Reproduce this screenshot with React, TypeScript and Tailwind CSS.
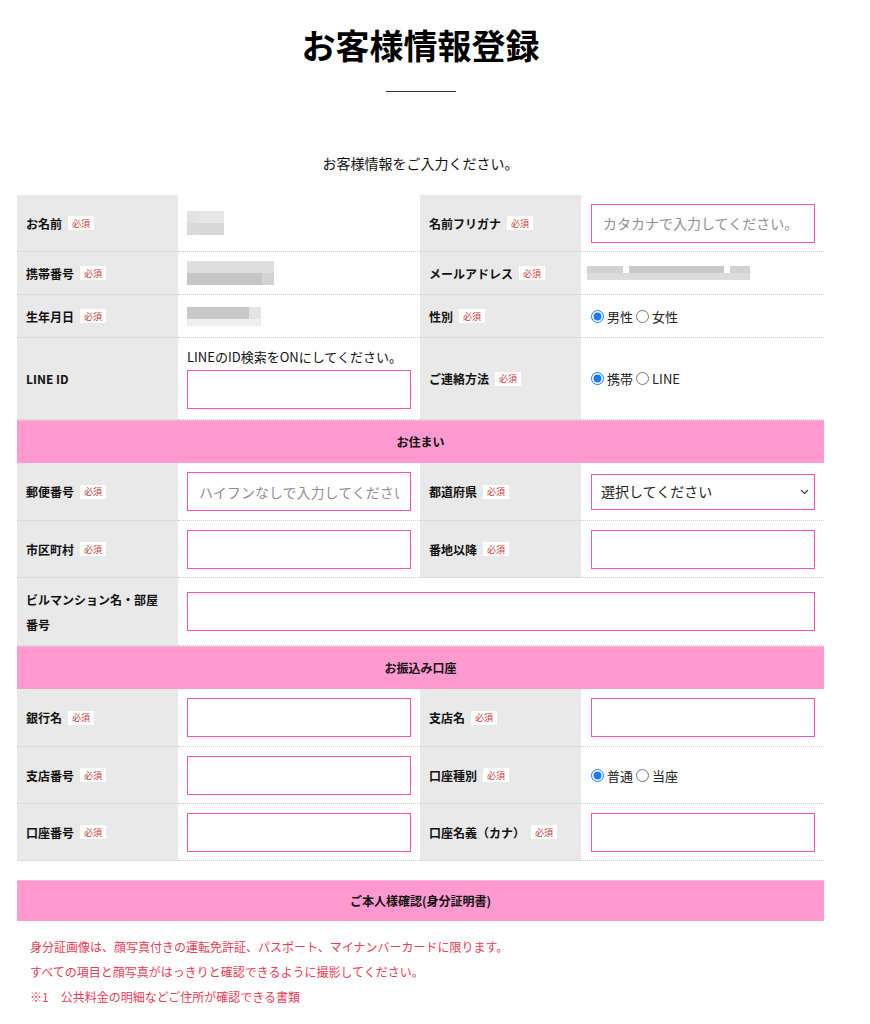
import React from "react";

const Badge = () => (
  <span className="ml-[6px] inline-flex h-[14px] items-center bg-white px-[4px] text-[9px] font-normal leading-none text-[#c73c3c]">
    必須
  </span>
);

const Label = ({ text, req = true, h }: { text: React.ReactNode; req?: boolean; h: string }) => (
  <div className={`flex items-center border-b border-dotted border-[#cfcfcf] bg-[#e9e9e9] pl-[9px] text-[12px] font-bold leading-[25px] text-[#111] ${h}`}>
    <span>{text}</span>
    {req && <Badge />}
  </div>
);

const Cell = ({ children, h, pl = "pl-[9px]", extra = "" }: { children?: React.ReactNode; h: string; pl?: string; extra?: string }) => (
  <div className={`flex items-center border-b border-dotted border-[#cfcfcf] bg-white ${pl} ${h} ${extra}`}>{children}</div>
);

const Input = ({ placeholder, w = "w-[224px]" }: { placeholder?: string; w?: string }) => (
  <input
    placeholder={placeholder}
    className={`h-[39px] ${w} border border-[#ff4fb0] bg-white px-[11px] text-[14px] text-[#222] outline-none placeholder:text-[#8f8f8f]`}
  />
);

const Radio = ({ a, b }: { a: string; b: string }) => (
  <div className="flex items-center text-[13px] leading-none text-[#222]">
    <input type="radio" defaultChecked name={a} className="m-0 h-[13px] w-[13px] accent-[#1a7cf5]" />
    <span className="ml-[3px]">{a}</span>
    <input type="radio" name={a} className="m-0 ml-[3px] h-[13px] w-[13px] accent-[#1a7cf5]" />
    <span className="ml-[3px]">{b}</span>
  </div>
);

const Pink = ({ text, h = "h-[43px]" }: { text: string; h?: string }) => (
  <div className={`col-span-4 flex items-center justify-center border-t border-[#ffb6da] bg-[#ff99cf] text-[12px] font-bold text-[#111] ${h}`}>
    {text}
  </div>
);

export default function App() {
  return (
    <div className="min-h-[1024px] w-[870px] bg-white font-['Noto_Sans_CJK_JP',sans-serif] text-[#222]">
      <div className="ml-[17px] w-[807px]">
        <h1 className="pt-[22px] text-center text-[34px] font-bold leading-[46px] text-black">お客様情報登録</h1>
        <div className="mx-auto mt-[23px] h-px w-[70px] bg-[#333]" />
        <p className="mt-[61px] text-center text-[14px] leading-[20px] text-[#111]">お客様情報をご入力ください。</p>

        <div className="mt-[22px] grid grid-cols-[161px_242px_161px_243px]">
          {/* row 1 */}
          <Label text="お名前" h="h-[57px]" />
          <Cell h="h-[57px]">
            <div className="flex flex-col blur-[0.6px]">
              <div className="flex">
                <div className="h-[12px] w-[12px] bg-[#e2e2e2]" />
                <div className="h-[12px] w-[25px] bg-[#e6e6e6]" />
              </div>
              <div className="flex">
                <div className="h-[12px] w-[12px] bg-[#dadada]" />
                <div className="h-[12px] w-[25px] bg-[#d8d8d8]" />
              </div>
            </div>
          </Cell>
          <Label text="名前フリガナ" h="h-[57px]" />
          <Cell h="h-[57px]" pl="pl-[10px]">
            <Input placeholder="カタカナで入力してください。" />
          </Cell>

          {/* row 2 */}
          <Label text="携帯番号" h="h-[43px]" />
          <Cell h="h-[43px]">
            <div className="flex flex-col blur-[0.6px]">
              <div className="h-[12px] w-[87px] bg-[#dedede]" />
              <div className="flex">
                <div className="h-[12px] w-[75px] bg-[#c6c6c6]" />
                <div className="h-[12px] w-[12px] bg-[#d4d4d4]" />
              </div>
            </div>
          </Cell>
          <Label text="メールアドレス" h="h-[43px]" />
          <Cell h="h-[43px]" pl="pl-[6px]">
            <div className="flex flex-col blur-[0.7px]">
              <div className="flex">
                <div className="h-[7px] w-[36px] bg-[#d2d2d2]" />
                <div className="h-[7px] w-[6px] bg-white" />
                <div className="h-[7px] w-[95px] bg-[#c9c9c9]" />
                <div className="h-[7px] w-[6px] bg-white" />
                <div className="h-[7px] w-[20px] bg-[#d2d2d2]" />
              </div>
              <div className="flex">
                <div className="h-[7px] w-[163px] bg-[#dcdcdc]" />
              </div>
            </div>
          </Cell>

          {/* row 3 */}
          <Label text="生年月日" h="h-[43px]" />
          <Cell h="h-[43px]">
            <div className="flex flex-col blur-[0.6px]">
              <div className="flex">
                <div className="h-[12px] w-[62px] bg-[#c8c8c8]" />
                <div className="h-[12px] w-[12px] bg-[#e4e4e4]" />
              </div>
              <div className="h-[7px] w-[74px] bg-[#efefef]" />
            </div>
          </Cell>
          <Label text="性別" h="h-[43px]" />
          <Cell h="h-[43px]" pl="pl-[10px]">
            <Radio a="男性" b="女性" />
          </Cell>

          {/* row 4 */}
          <Label text="LINE ID" req={false} h="h-[82px]" />
          <Cell h="h-[82px]" extra="flex-col !items-start justify-center gap-[4px]">
            <span className="text-[13px] leading-[18px] text-[#111]">LINEのID検索をONにしてください。</span>
            <Input />
          </Cell>
          <Label text="ご連絡方法" h="h-[82px]" />
          <Cell h="h-[82px]" pl="pl-[10px]">
            <Radio a="携帯" b="LINE" />
          </Cell>

          <Pink text="お住まい" />

          <Label text="郵便番号" h="h-[58px]" />
          <Cell h="h-[58px]">
            <Input placeholder="ハイフンなしで入力してください" />
          </Cell>
          <Label text="都道府県" h="h-[58px]" />
          <Cell h="h-[58px]" pl="pl-[10px]">
            <div className="relative h-[36px] w-[224px] border border-[#ff4fb0] bg-white">
              <select className="h-full w-full appearance-none bg-transparent pl-[9px] text-[14px] text-[#222] outline-none">
                <option>選択してください</option>
              </select>
              <svg className="pointer-events-none absolute right-[5px] top-[14px]" width="9" height="6" viewBox="0 0 9 6">
                <path d="M1 1l3.5 3.5L8 1" fill="none" stroke="#444" strokeWidth="1.2" />
              </svg>
            </div>
          </Cell>

          <Label text="市区町村" h="h-[57px]" />
          <Cell h="h-[57px]">
            <Input />
          </Cell>
          <Label text="番地以降" h="h-[57px]" />
          <Cell h="h-[57px]" pl="pl-[10px]">
            <Input />
          </Cell>

          <div className="flex h-[68px] items-center border-b border-dotted border-[#cfcfcf] bg-[#e9e9e9] pl-[9px] pr-[16px] text-[12px] font-bold leading-[25px] text-[#111]">
            ビルマンション名・部屋番号
          </div>
          <Cell h="h-[68px]" extra="col-span-3">
            <Input w="w-[628px]" />
          </Cell>

          <Pink text="お振込み口座" />

          <Label text="銀行名" h="h-[58px]" />
          <Cell h="h-[58px]">
            <Input />
          </Cell>
          <Label text="支店名" h="h-[58px]" />
          <Cell h="h-[58px]" pl="pl-[10px]">
            <Input />
          </Cell>

          <Label text="支店番号" h="h-[57px]" />
          <Cell h="h-[57px]">
            <Input />
          </Cell>
          <Label text="口座種別" h="h-[57px]" />
          <Cell h="h-[57px]" pl="pl-[10px]">
            <Radio a="普通" b="当座" />
          </Cell>

          <Label text="口座番号" h="h-[57px]" />
          <Cell h="h-[57px]">
            <Input />
          </Cell>
          <Label text="口座名義（カナ）" h="h-[57px]" />
          <Cell h="h-[57px]" pl="pl-[10px]">
            <Input />
          </Cell>
        </div>

        <div className="mt-[19px] grid grid-cols-[161px_242px_161px_243px]">
          <Pink text="ご本人様確認(身分証明書)" h="h-[41px]" />
        </div>

        <div className="mt-[13px] pl-[13px] text-[12px] leading-[25px] text-[#ea3a55]">
          <p>身分証画像は、顔写真付きの運転免許証、パスポート、マイナンバーカードに限ります。</p>
          <p>すべての項目と顔写真がはっきりと確認できるように撮影してください。</p>
          <p>※1　公共料金の明細などご住所が確認できる書類</p>
        </div>
      </div>
    </div>
  );
}
